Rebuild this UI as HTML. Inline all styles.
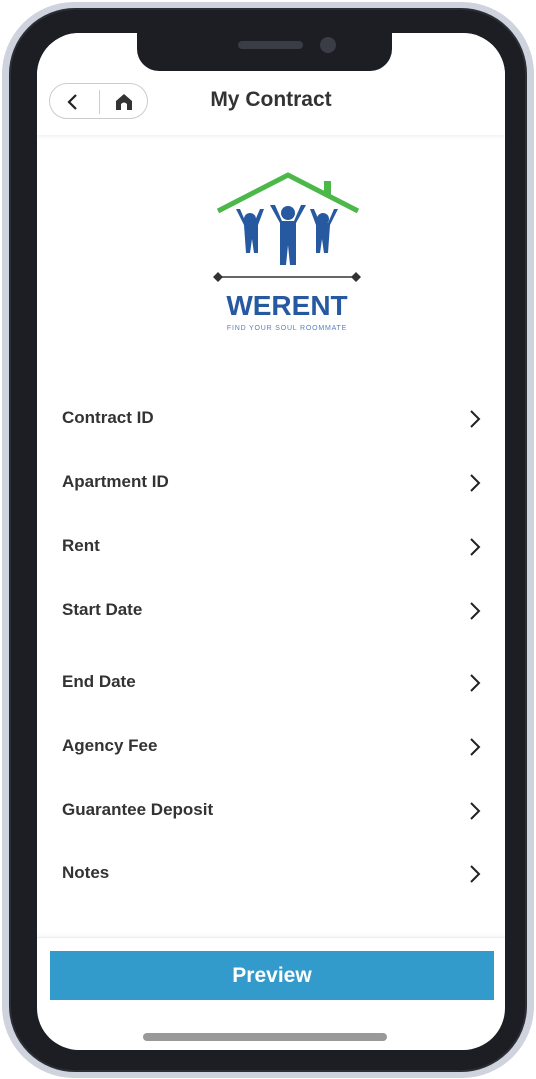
<!DOCTYPE html>
<html><head><meta charset="utf-8"><style>
*{margin:0;padding:0;box-sizing:border-box}
body{width:536px;height:1079px;background:#fff;overflow:hidden;position:relative;font-family:"Liberation Sans",Arial,sans-serif}
.outer{position:absolute;left:2px;top:2px;width:532px;height:1076px;border-radius:72px;background:#cfd3de}
.bez{position:absolute;left:9px;top:8px;width:518px;height:1064px;border-radius:66px;background:#1d1e23;border:2px solid #2c2e36}
.scr{position:absolute;left:37px;top:33px;width:468px;height:1017px;border-radius:42px;background:#fff;overflow:hidden}
.notch{position:absolute;left:137px;top:33px;width:255px;height:38px;background:#1d1e23;border-radius:0 0 22px 22px}
.spk{position:absolute;left:238px;top:41px;width:65px;height:8px;border-radius:4px;background:#3a3c46}
.cam{position:absolute;left:320px;top:37px;width:16px;height:16px;border-radius:50%;background:#3a3c46}
.hdr{position:absolute;left:0;top:0;width:468px;height:102px;background:#fff;box-shadow:0 2px 4px rgba(0,0,0,.06)}
.pill{position:absolute;left:12px;top:50px;width:99px;height:36px;border:1px solid #ccc;border-radius:18px}
.pill .sep{position:absolute;left:49px;top:6px;width:1px;height:24px;background:#ccc}
.title{position:absolute;left:0;width:468px;top:55px;text-align:center;font-weight:bold;font-size:21px;color:#333}
.row{position:absolute;left:25px;font-weight:bold;font-size:17px;color:#333}
.chev{position:absolute;left:432px}
.foot{position:absolute;left:0;top:904px;width:468px;height:113px;border-top:1px solid #eee;box-shadow:0 -2px 4px rgba(0,0,0,.04)}
.btn{position:absolute;left:13px;top:918px;width:444px;height:49px;background:#339acc;color:#fff;font-weight:bold;font-size:21px;text-align:center;line-height:49px}
.home{position:absolute;left:106px;top:1000px;width:244px;height:8px;border-radius:4px;background:#999}
</style></head><body>
<div class="outer"></div>
<div class="bez"></div>
<div class="scr">
 <div class="hdr">
  <div class="pill"><svg style="position:absolute;left:16px;top:9px" width="14" height="18" viewBox="0 0 14 18"><path d="M10 2 L3 9 L10 16" fill="none" stroke="#222" stroke-width="2.2"/></svg><div class="sep"></div>
  <svg style="position:absolute;left:64px;top:9px" width="20" height="18" viewBox="0 0 20 18"><path d="M2 8 L10 1 L18 8 V17 H13 V11 Q10 8 7 11 V17 H2 Z" fill="#333"/></svg></div>
  <div class="title">My Contract</div>
 </div>
 <svg style="position:absolute;left:163px;top:132px" width="170" height="175" viewBox="0 0 170 175">
  <path d="M18 46 L88 10 L158 46" fill="none" stroke="#4cb849" stroke-width="5"/>
  <rect x="124" y="16" width="7" height="14" fill="#4cb849"/>
  <g fill="#2659a0">
   <circle cx="50" cy="54" r="6"/><circle cx="88" cy="48" r="7"/><circle cx="123" cy="54" r="6"/>
   <path d="M36 44 L44 60 L46 88 L50 88 L52 74 L54 88 L58 88 L58 60 L64 44 L60 44 L54 58 L46 58 L40 44Z"/>
   <path d="M70 40 L80 58 L80 100 L86 100 L88 80 L90 100 L96 100 L96 58 L106 40 L101 40 L94 56 L82 56 L75 40Z"/>
   <path d="M110 44 L116 60 L116 88 L120 88 L122 74 L124 88 L128 88 L130 60 L138 44 L134 44 L128 58 L120 58 L114 44Z"/>
  </g>
  <line x1="18" y1="112" x2="156" y2="112" stroke="#333" stroke-width="1.5"/>
  <path d="M13 112 L18 107 L23 112 L18 117Z M151 112 L156 107 L161 112 L156 117Z" fill="#333"/>
  <text x="87" y="150" text-anchor="middle" font-size="28" font-weight="bold" fill="#2659a0" font-family="Liberation Sans,sans-serif">WERENT</text>
  <text x="87" y="165" text-anchor="middle" font-size="7" fill="#5a7fb8" letter-spacing="0.8" font-family="Liberation Sans,sans-serif">FIND YOUR SOUL ROOMMATE</text>
 </svg>
 <div class="row" style="top:375px">Contract ID</div>
 <div class="row" style="top:439px">Apartment ID</div>
 <div class="row" style="top:503px">Rent</div>
 <div class="row" style="top:567px">Start Date</div>
 <div class="row" style="top:639px">End Date</div>
 <div class="row" style="top:703px">Agency Fee</div>
 <div class="row" style="top:767px">Guarantee Deposit</div>
 <div class="row" style="top:830px">Notes</div>
 <svg class="chev" style="top:376px" width="12" height="20" viewBox="0 0 12 20"><path d="M2 2 L10 10 L2 18" fill="none" stroke="#222" stroke-width="2"/></svg>
 <svg class="chev" style="top:440px" width="12" height="20" viewBox="0 0 12 20"><path d="M2 2 L10 10 L2 18" fill="none" stroke="#222" stroke-width="2"/></svg>
 <svg class="chev" style="top:504px" width="12" height="20" viewBox="0 0 12 20"><path d="M2 2 L10 10 L2 18" fill="none" stroke="#222" stroke-width="2"/></svg>
 <svg class="chev" style="top:568px" width="12" height="20" viewBox="0 0 12 20"><path d="M2 2 L10 10 L2 18" fill="none" stroke="#222" stroke-width="2"/></svg>
 <svg class="chev" style="top:640px" width="12" height="20" viewBox="0 0 12 20"><path d="M2 2 L10 10 L2 18" fill="none" stroke="#222" stroke-width="2"/></svg>
 <svg class="chev" style="top:704px" width="12" height="20" viewBox="0 0 12 20"><path d="M2 2 L10 10 L2 18" fill="none" stroke="#222" stroke-width="2"/></svg>
 <svg class="chev" style="top:768px" width="12" height="20" viewBox="0 0 12 20"><path d="M2 2 L10 10 L2 18" fill="none" stroke="#222" stroke-width="2"/></svg>
 <svg class="chev" style="top:831px" width="12" height="20" viewBox="0 0 12 20"><path d="M2 2 L10 10 L2 18" fill="none" stroke="#222" stroke-width="2"/></svg>
 <div class="foot"></div>
 <div class="btn">Preview</div>
 <div class="home"></div>
</div>
<div class="notch"></div>
<div class="spk"></div>
<div class="cam"></div>
</body></html>
